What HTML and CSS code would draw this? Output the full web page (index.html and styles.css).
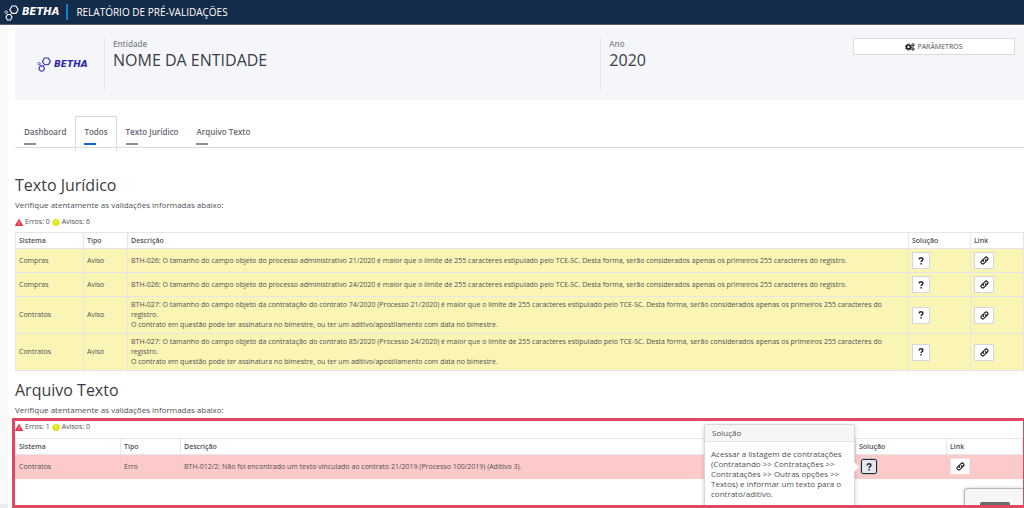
FILE: index.html
```html
<!DOCTYPE html>
<html lang="pt-BR">
<head>
<meta charset="utf-8">
<title>Relatório de Pré-Validações</title>
<link rel="stylesheet" href="styles.css">
</head>
<body>
<svg class="sprite" aria-hidden="true">
  <symbol id="mark" viewBox="0 0 16 17">
    <g fill="none" stroke="currentColor" stroke-width="1.1" stroke-linejoin="round">
      <path d="M8 2h4l2.200 3.700L12 9.400H8L5.800 5.700z"/>
      <path d="M3.500 10.500h3l1.600 2.800-1.600 2.700h-3l-1.600-2.700z"/>
      <path d="M1.500 7h1.400l.7 1.200-.7 1.200H1.500L.8 8.200z" stroke-width=".8"/>
    </g>
  </symbol>
  <symbol id="cogs" viewBox="0 0 20 16">
    <circle cx="7" cy="8" r="4" fill="none" stroke="currentColor" stroke-width="3.4"/>
    <circle cx="7" cy="8" r="6.2" fill="none" stroke="currentColor" stroke-width="2" stroke-dasharray="2.5 2.37"/>
    <circle cx="16" cy="4" r="2" fill="none" stroke="currentColor" stroke-width="1.8"/>
    <circle cx="16" cy="4" r="3.2" fill="none" stroke="currentColor" stroke-width="1.2" stroke-dasharray="1.3 1.2"/>
    <circle cx="16" cy="12" r="2" fill="none" stroke="currentColor" stroke-width="1.8"/>
    <circle cx="16" cy="12" r="3.2" fill="none" stroke="currentColor" stroke-width="1.2" stroke-dasharray="1.3 1.2"/>
  </symbol>
  <symbol id="warn" viewBox="0 0 16 14">
    <path d="M8 1 15 13H1z" fill="#ee2b45" stroke="#ee2b45" stroke-width="2" stroke-linejoin="round"/>
    <path d="M7.200 5h1.600L8.600 9.500H7.400zM7.200 10.500h1.600v1.500H7.200z" fill="#fff"/>
  </symbol>
  <symbol id="info" viewBox="0 0 14 14">
    <circle cx="7" cy="7" r="7" fill="#d8e600"/>
    <path d="M6 2.500h2L7.700 8H6.300zM6 9.300h2v2H6z" fill="#fff"/>
  </symbol>
  <symbol id="link" viewBox="0 0 16 16">
    <g fill="none" stroke="currentColor" stroke-width="2.200" stroke-linecap="round">
      <path d="M6.300 9.700a3 3 0 0 1 0-4.200l3-3a3 3 0 0 1 4.200 4.200L11 9.200"/>
      <path d="M9.700 6.300a3 3 0 0 1 0 4.200l-3 3a3 3 0 0 1-4.200-4.200L5 6.800"/>
    </g>
  </symbol>
  <symbol id="question" viewBox="0 0 10 14">
    <path d="M1.700 4.300C1.900 2.200 3.200 1.300 5 1.300s3.300 1 3.300 2.700c0 2.200-3.100 2.300-3.100 4.700" fill="none" stroke="currentColor" stroke-width="2.600"/>
    <path d="M3.900 10.400h2.600V13H3.900z" fill="currentColor"/>
  </symbol>
</svg>

<header class="topbar">
  <span class="brand"><svg class="brand-mark"><use href="#mark"/></svg>BETHA</span>
  <h1 class="topbar-title">RELATÓRIO DE PRÉ-VALIDAÇÕES</h1>
</header>

<main class="page">
  <section class="entity">
    <div class="entity-logo"><span class="brand brand-blue"><svg class="brand-mark"><use href="#mark"/></svg>BETHA</span></div>
    <div class="field field-name"><span class="field-label">Entidade</span><span class="field-value">NOME DA ENTIDADE</span></div>
    <div class="field field-year"><span class="field-label">Ano</span><span class="field-value">2020</span></div>
    <button class="params" type="button"><svg class="cogs"><use href="#cogs"/></svg>PARÂMETROS</button>
  </section>

  <nav class="tabs">
    <a class="tab" href="#dashboard">Dashboard</a>
    <a class="tab tab-active" href="#todos">Todos</a>
    <a class="tab" href="#juridico">Texto Jurídico</a>
    <a class="tab" href="#arquivo">Arquivo Texto</a>
  </nav>

  <section class="report" id="juridico">
    <h2 class="heading">Texto Jurídico</h2>
    <p class="lead">Verifique atentamente as validações informadas abaixo:</p>
    <p class="counts"><svg class="count-icon"><use href="#warn"/></svg><span>Erros: 0</span><svg class="count-icon"><use href="#info"/></svg><span>Avisos: 6</span></p>
    <table class="grid">
      <colgroup><col class="c-system"><col class="c-type"><col><col class="c-fix"><col class="c-link"></colgroup>
      <thead><tr><th>Sistema</th><th>Tipo</th><th>Descrição</th><th>Solução</th><th>Link</th></tr></thead>
      <tbody class="warning">
        <tr><td>Compras</td><td>Aviso</td><td>BTH-026: O tamanho do campo objeto do processo administrativo 21/2020 é maior que o limite de 255 caracteres estipulado pelo TCE-SC. Desta forma, serão considerados apenas os primeiros 255 caracteres do registro.</td><td><button class="act" type="button" aria-label="Solução"><svg class="q-icon"><use href="#question"/></svg></button></td><td><button class="act act-link" type="button" aria-label="Link"><svg class="l-icon"><use href="#link"/></svg></button></td></tr>
        <tr><td>Compras</td><td>Aviso</td><td>BTH-026: O tamanho do campo objeto do processo administrativo 24/2020 é maior que o limite de 255 caracteres estipulado pelo TCE-SC. Desta forma, serão considerados apenas os primeiros 255 caracteres do registro.</td><td><button class="act" type="button" aria-label="Solução"><svg class="q-icon"><use href="#question"/></svg></button></td><td><button class="act act-link" type="button" aria-label="Link"><svg class="l-icon"><use href="#link"/></svg></button></td></tr>
        <tr><td>Contratos</td><td>Aviso</td><td>BTH-027: O tamanho do campo objeto da contratação do contrato 74/2020 (Processo 21/2020) é maior que o limite de 255 caracteres estipulado pelo TCE-SC. Desta forma, serão considerados apenas os primeiros 255 caracteres do registro.<br>O contrato em questão pode ter assinatura no bimestre, ou ter um aditivo/apostilamento com data no bimestre.</td><td><button class="act" type="button" aria-label="Solução"><svg class="q-icon"><use href="#question"/></svg></button></td><td><button class="act act-link" type="button" aria-label="Link"><svg class="l-icon"><use href="#link"/></svg></button></td></tr>
        <tr><td>Contratos</td><td>Aviso</td><td>BTH-027: O tamanho do campo objeto da contratação do contrato 85/2020 (Processo 24/2020) é maior que o limite de 255 caracteres estipulado pelo TCE-SC. Desta forma, serão considerados apenas os primeiros 255 caracteres do registro.<br>O contrato em questão pode ter assinatura no bimestre, ou ter um aditivo/apostilamento com data no bimestre.</td><td><button class="act" type="button" aria-label="Solução"><svg class="q-icon"><use href="#question"/></svg></button></td><td><button class="act act-link" type="button" aria-label="Link"><svg class="l-icon"><use href="#link"/></svg></button></td></tr>
      </tbody>
    </table>
  </section>

  <section class="report report-last" id="arquivo">
    <h2 class="heading">Arquivo Texto</h2>
    <p class="lead">Verifique atentamente as validações informadas abaixo:</p>
    <div class="highlight">
      <p class="counts"><svg class="count-icon"><use href="#warn"/></svg><span>Erros: 1</span><svg class="count-icon"><use href="#info"/></svg><span>Avisos: 0</span></p>
      <table class="grid">
        <colgroup><col class="e-system"><col class="e-type"><col><col class="e-fix"><col class="e-link"></colgroup>
        <thead><tr><th>Sistema</th><th>Tipo</th><th>Descrição</th><th>Solução</th><th>Link</th></tr></thead>
        <tbody class="error">
          <tr><td>Contratos</td><td>Erro</td><td>BTH-012/2: Não foi encontrado um texto vinculado ao contrato 21/2019 (Processo 100/2019) (Aditivo 3).</td>
          <td><div class="anchor"><button class="act act-focus" type="button" aria-label="Solução" aria-describedby="tip"><svg class="q-icon"><use href="#question"/></svg></button>
            <div class="popover" id="tip" role="tooltip"><h3 class="popover-title">Solução</h3><p class="popover-text">Acessar a listagem de contratações (Contratando &gt;&gt; Contratações &gt;&gt; Contratações &gt;&gt; Outras opções &gt;&gt; Textos) e informar um texto para o contrato/aditivo.</p></div></div></td>
          <td><button class="act act-link act-plain" type="button" aria-label="Link"><svg class="l-icon"><use href="#link"/></svg></button></td></tr>
        </tbody>
      </table>
      <div class="widget"><span class="widget-handle"></span></div>
    </div>
  </section>
</main>
</body>
</html>
```
FILE: styles.css
```css
* { box-sizing: border-box; }
body {
  margin: 0;
  height: 100vh;
  overflow: hidden;
  display: flex;
  flex-direction: column;
  font: 7px/10px "Open Sans", sans-serif;
  color: #4e5055;
  background: linear-gradient(#f9f9fa, #f9f9fa) no-repeat 0 0 / 100% calc(100% - 4px), #e9ebee;
}
h1, h2, h3, p { margin: 0; font-weight: 400; }
button { font: inherit; color: inherit; padding: 0; }
svg { display: block; }
.sprite { position: absolute; width: 0; height: 0; }

.topbar {
  flex: none;
  display: flex;
  align-items: center;
  height: 25px;
  padding-left: 4px;
  color: #fff;
  background: #142b49;
  border-bottom: 1px solid #5f5a70;
}
.brand {
  display: flex;
  align-items: center;
  gap: 2px;
  font: italic 700 10px/16px "DejaVu Sans", sans-serif;
}
.brand-mark { width: 16px; height: 17px; }
.brand-blue { color: #2a2aa5; font-size: 9px; }
.brand-blue .brand-mark { width: 15px; height: 16px; }
.topbar-title {
  margin-left: 7px;
  padding-left: 8px;
  border-left: 2px solid #0c87c8;
  font-size: 10px;
  line-height: 16px;
}

.page {
  flex: 1;
  min-height: 0;
  display: flex;
  flex-direction: column;
  margin-left: 8px;
  padding: 3px 0 0 7px;
  background: #fff;
}
.entity {
  flex: none;
  display: flex;
  align-items: flex-start;
  padding: 10px 9px 10px 0;
  background: #f4f6fa;
}
.entity-logo { width: 89px; padding: 18px 0 0 22px; }
.field {
  display: flex;
  flex-direction: column;
  height: 52px;
  padding-left: 8px;
  border-left: 1px solid #e6e8ec;
}
.field-name { flex: 2; }
.field-year { flex: 1; }
.field-label { font-size: 8px; line-height: 12px; font-weight: 600; color: #85878b; }
.field-value { font-size: 16px; line-height: 21px; color: #3b3d42; }
.params {
  display: flex;
  align-items: center;
  justify-content: center;
  gap: 2px;
  width: 162px;
  height: 17px;
  background: #fff;
  border: 1px solid #d9dbde;
}
.cogs { width: 10px; height: 8px; color: #222; }

.tabs {
  flex: none;
  display: flex;
  margin-top: 16px;
  height: 32px;
  border-bottom: 1px solid #d9dadd;
}
.tab {
  padding: 9px 8px 0;
  height: 32px;
  border: 1px solid transparent;
  border-bottom: 0;
  font-size: 8px;
  line-height: 12px;
  font-weight: 600;
  color: #66686d;
  text-decoration: none;
}
.tab::after {
  content: "";
  display: block;
  width: 12px;
  height: 2px;
  margin-top: 5px;
  background: #8d8f93;
}
.tab-active { height: 35px; border-color: #d9dadd; }
.tab-active::after { background: #1565d0; }

.report { padding-top: 25px; }
.report-last { flex: 1; min-height: 0; display: flex; flex-direction: column; padding-top: 7px; }
.heading { font-size: 16px; line-height: 24px; color: #3b3d42; }
.lead { margin-top: 2px; font-size: 8px; line-height: 12px; }
.counts { display: flex; align-items: center; gap: 2px; line-height: 10px; }
.report > .counts { margin: 6px 0 5px; }
.count-icon { width: 8px; height: 7px; }

.grid { width: 100%; table-layout: fixed; border-collapse: collapse; }
.grid th, .grid td { padding: 3px; border: 1px solid #e5e6e8; text-align: left; vertical-align: middle; }
.grid th { height: 16px; padding: 0 3px; font-weight: 600; }
.grid td { height: 24px; }
.warning { background: #faf5b4; }
.error { background: #fdcaca; }
.error td { border-color: #f6c8ca; }
.c-system { width: 68px; }
.c-type { width: 44px; }
.c-fix { width: 62px; }
.c-link { width: 53px; }
.e-system { width: 105px; }
.e-type { width: 60px; }
.e-fix { width: 91px; }
.e-link { width: 76px; }

.act {
  display: flex;
  align-items: center;
  justify-content: center;
  width: 18px;
  height: 17px;
  color: #26282c;
  background: #fff;
  border: 1px solid #d4d6d8;
}
.act-link { width: 20px; }
.act-plain { border-color: #f3dfe0; }
.act-focus { width: 16px; height: 15px; background: #e6e7ee; border: 1px solid #22242c; border-radius: 2px; outline: 1px solid #c9c2c8; }
.q-icon { width: 6px; height: 8px; }
.l-icon { width: 9px; height: 9px; }

.highlight {
  position: relative;
  flex: 1;
  min-height: 0;
  overflow: hidden;
  margin: 2px -2px 0 -3px;
  border: 3px solid #e04763;
}
.highlight .counts { margin: 1px 0 6px; }
.anchor { position: relative; padding-left: 2px; }
.popover {
  position: absolute;
  right: calc(100% + 4px);
  top: -35px;
  width: 151px;
  height: 110px;
  background: #fff;
  border: 1px solid #d6d7da;
  border-radius: 2px;
  box-shadow: 0 1px 4px rgba(0, 0, 0, .18);
}
.popover::after {
  content: "";
  position: absolute;
  left: 100%;
  top: 37px;
  border: 5px solid transparent;
  border-left-color: #fff;
  border-right: 0;
}
.popover-title {
  padding: 2px 7px;
  font-size: 8px;
  line-height: 12px;
  background: #f6f6f7;
  border-bottom: 1px solid #e4e5e7;
}
.popover-text { padding: 7px 6px; font-size: 8px; line-height: 10px; }
.widget {
  position: absolute;
  right: 0;
  bottom: 0;
  width: 59px;
  height: 17px;
  padding: 13px 0 0 15px;
  background: #f6f6f7;
  border: solid #b9babd;
  border-width: 1px 0 0 1px;
  border-radius: 4px 0 0 0;
  box-shadow: 0 0 3px rgba(0, 0, 0, .25);
}
.widget-handle { display: block; width: 30px; height: 6px; border-radius: 2px; background: #6b6b6b; }
```
